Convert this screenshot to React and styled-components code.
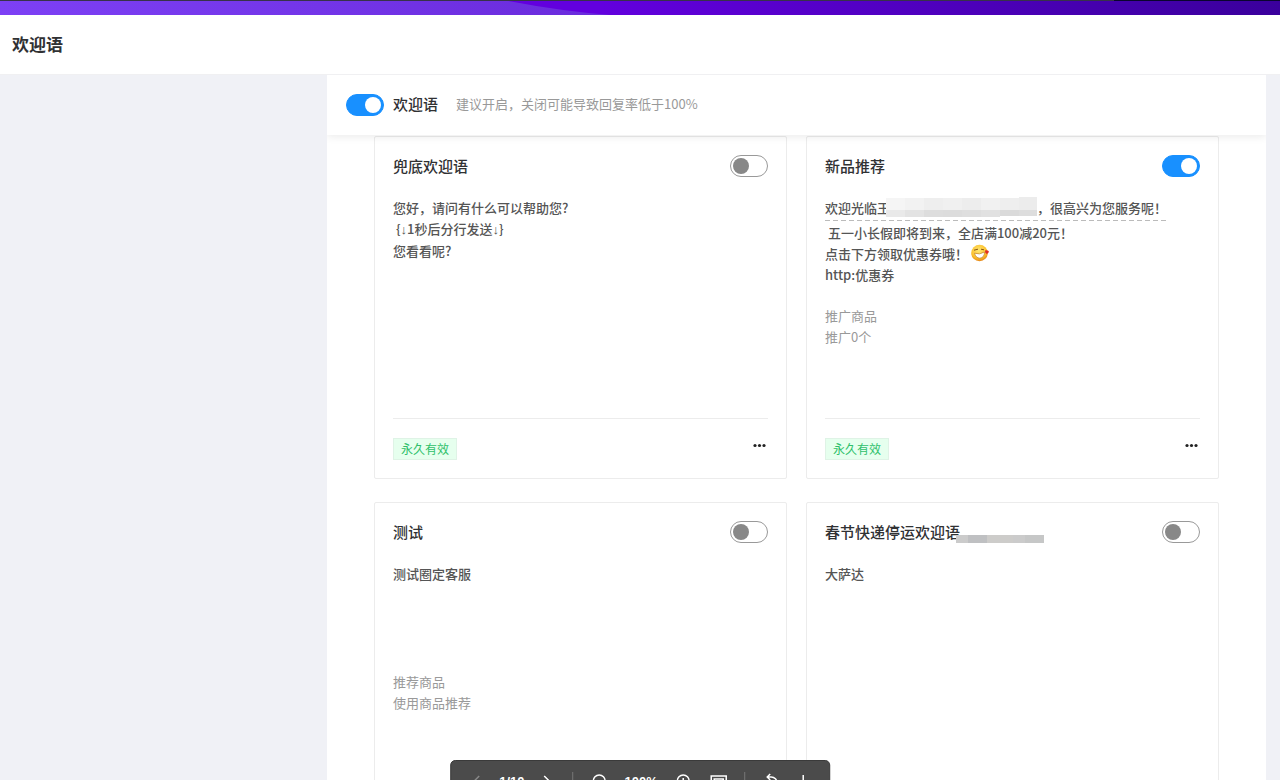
import React from "react";
import styled, { createGlobalStyle } from "styled-components";

const GlobalStyle = createGlobalStyle`
  * { box-sizing: border-box; }
  body {
    margin: 0;
    background: #f0f1f6;
    color: #303133;
    font-family: "Noto Sans CJK SC", "Liberation Sans", sans-serif;
    font-size: 13px;
    line-height: 21px;
  }
  h1, h2, p { margin: 0; }
`;

const Page = styled.div`
  height: 100vh;
  overflow-y: auto;
  scrollbar-width: none;
`;

const BannerEdge = styled.div`
  height: 1px;
  background: linear-gradient(90deg, #37324a 87%, #0a0530 87%);
`;

const Banner = styled.div`
  height: 14px;
  background: linear-gradient(90deg, #6200de 47%, #3a009c);
  svg { display: block; width: 48%; height: 14px; }
`;

const Header = styled.header`
  height: 60px;
  padding: 0 12px 2px;
  display: flex;
  align-items: center;
  background: #fff;
  border-bottom: 1px solid #f0f0f2;
`;

const PageTitle = styled.h1`
  font-size: 17px;
  line-height: 24px;
  font-weight: 700;
`;

const Main = styled.main`
  display: grid;
  grid-template-columns: 327px minmax(0, 1fr) 14px;
`;

const Panel = styled.section`
  grid-column: 2;
  background: #fff;
`;

const PanelHead = styled.label`
  height: 60px;
  padding: 0 19px;
  display: flex;
  align-items: center;
  background: #fff;
  box-shadow: 0 2px 8px rgba(0, 0, 0, 0.08);
  clip-path: inset(0 0 -10px 0);
`;

const PanelTitle = styled.span`
  margin: 0 18px 0 9px;
  padding-bottom: 3px;
  font-size: 15px;
  font-weight: 500;
`;

const Hint = styled.span`
  padding-bottom: 3px;
  color: #999;
`;

const Switch = styled.input`
  appearance: none;
  flex: none;
  margin: 0;
  width: 38px;
  height: 22px;
  padding: 2px;
  display: flex;
  border: 1px solid #999;
  border-radius: 11px;
  background: #fff;
  &::before {
    content: "";
    width: 16px;
    height: 16px;
    border-radius: 50%;
    background: #888;
  }
  &:checked {
    justify-content: flex-end;
    border-color: #1890ff;
    background: #1890ff;
  }
  &:checked::before { background: #fff; }
`;

const CardGrid = styled.div`
  padding: 1px 47px 23px;
  display: grid;
  grid-template-columns: repeat(2, minmax(0, 1fr));
  gap: 23px 19px;
`;

const CardBox = styled.article`
  min-height: 343px;
  padding: 18px;
  display: flex;
  flex-direction: column;
  border: 1px solid #ececec;
  border-radius: 2px;
`;

const CardHead = styled.div`
  display: flex;
  justify-content: space-between;
  align-items: center;
  height: 22px;
  margin-bottom: 20px;
`;

const CardTitle = styled.h2`
  display: flex;
  font-size: 15px;
  line-height: 22px;
  font-weight: 500;
`;

const Message = styled.div`
  min-height: 88px;
  color: #555;
  font-weight: 500;
  white-space: pre-wrap;
`;

const Arrow = styled.span`
  font-family: "Liberation Sans", sans-serif;
`;

const Greeting = styled.p`
  display: flex;
  width: fit-content;
  padding-bottom: 3px;
  margin-bottom: 1px;
  background: repeating-linear-gradient(90deg, #bbb 0 5px, transparent 5px 8px) bottom / 100% 1px no-repeat;
`;

const Promo = styled.div`
  margin: 20px 0;
  color: #999;
`;

const CardFoot = styled.footer`
  margin-top: auto;
  padding-top: 19px;
  display: flex;
  justify-content: space-between;
  border-top: 1px solid #ececec;
`;

const Tag = styled.span`
  padding: 0 7px;
  border: 1px solid #dff3e6;
  background: #e6ffee;
  color: #2fbf6b;
  font-size: 12px;
  line-height: 20px;
`;

const MoreButton = styled.button`
  width: 16px;
  height: 16px;
  padding: 0;
  border: 0;
  background: none;
  svg { display: block; }
`;

const NameMask = styled.svg`
  flex: none;
  display: block;
  margin-left: -4px;
`;

const Emoji = styled.svg`
  margin-left: 3px;
  vertical-align: -3px;
`;

const Toolbar = styled.div`
  position: fixed;
  left: 50%;
  bottom: -24px;
  transform: translateX(-50%);
  height: 44px;
  padding: 0 16px;
  display: flex;
  align-items: center;
  border: 1px solid #3a3a3a;
  border-radius: 5px;
  background: #4b4b4b;
  color: #fff;
  font: 700 13px/20px "Liberation Sans", sans-serif;
`;

const ToolGroup = styled.div`
  display: flex;
  align-items: center;
  gap: ${(p) => (p.$wide ? "15px" : "12px")};
`;

const ToolButton = styled.button`
  width: 20px;
  height: 20px;
  padding: 0;
  border: 0;
  background: none;
  color: ${(p) => (p.disabled ? "#888" : "#fff")};
  svg { display: block; }
`;

const Separator = styled.span`
  width: 1px;
  height: 20px;
  margin: 0 16px;
  background: #777;
`;

const toolPaths = {
  prev: "M12 4 6 10l6 6",
  next: "M8 4l6 6-6 6",
  zoomOut: "M16 9a6 6 0 1 1-12 0a6 6 0 0 1 12 0ZM14 14l4 4M7 9h6",
  zoomIn: "M16 9a6 6 0 1 1-12 0a6 6 0 0 1 12 0ZM14 14l4 4M7 9h6M10 6v6",
  fit: "M3 4h15v12H3ZM6 7h9v6H6Z",
  rotate: "M6 5h4a6 6 0 1 1-6 6M9 2 6 5l3 3",
  download: "M10 3v11M5 9l5 5 5-5M3 17h14",
};

function Tool({ name, label, disabled }) {
  return (
    <ToolButton type="button" aria-label={label} disabled={disabled}>
      <svg width="20" height="20" viewBox="0 0 20 20" fill="none" stroke="currentColor" strokeWidth="1.5">
        <path d={toolPaths[name]} />
      </svg>
    </ToolButton>
  );
}

function GreetingMask() {
  const top = ["#f5f5f5", "#f2f2f2", "#eee", "#f0f0f0", "#ededed", "#f1f1f1", "#eee", "#ececec"];
  const low = ["#e9e9e9", "#e3e3e3", "#ddd", "#dcdcdc", "#dedede", "#e1e1e1", "#dadada", "#ddd"];
  return (
    <NameMask width="151" height="21" viewBox="0 0 151 21" aria-hidden="true">
      {top.map((fill, i) => (
        <rect key={i} x={i * 19} y={i > 6 ? 0 : 1} width="19" height="13" fill={fill} />
      ))}
      {low.map((fill, i) => (
        <rect key={i} x={i * 19} y="13" width="19" height={i < 6 ? 7 : 6} fill={fill} />
      ))}
    </NameMask>
  );
}

function TitleMask() {
  return (
    <NameMask width="88" height="22" viewBox="0 0 88 22" aria-hidden="true">
      <rect y="14" width="88" height="8" fill="#cbcbcb" />
      <rect x="12" y="14" width="19" height="8" fill="#bfc0c2" />
      <rect x="31" y="14" width="26" height="8" fill="#cdccca" />
      <rect x="69" y="14" width="19" height="8" fill="#c6c7c7" />
    </NameMask>
  );
}

function LaughEmoji() {
  return (
    <Emoji width="18" height="18" viewBox="0 0 18 18" role="img" aria-label="笑脸">
      <defs>
        <radialGradient id="face" cx="45%" cy="35%" r="65%">
          <stop offset="0" stopColor="#ffe873" />
          <stop offset="0.7" stopColor="#fbc02d" />
          <stop offset="1" stopColor="#e5851a" />
        </radialGradient>
      </defs>
      <circle cx="8.5" cy="9" r="8.3" fill="url(#face)" />
      <path d="M3 6.2 7 5.2M10 5.2l3 .6" stroke="#8a5515" strokeWidth="1" fill="none" />
      <path d="M3.5 9.2q4.8 2 10-1.2q0 5.5-4.7 6.2Q4.8 14 3.5 9.2Z" fill="#fff" stroke="#b77420" strokeWidth="0.6" />
      <path d="M14 6.5q2-.8 3.6.5q.8 1.8-1.8 3q-2-.6-1.8-3.5Z" fill="#e12d25" />
    </Emoji>
  );
}

function Card({ title, mask, on, promo, children }) {
  return (
    <CardBox>
      <CardHead>
        <CardTitle>{title}{mask}</CardTitle>
        <Switch type="checkbox" role="switch" aria-label={title} defaultChecked={on} />
      </CardHead>
      <Message>{children}</Message>
      {promo && <Promo>{promo.map((line) => <p key={line}>{line}</p>)}</Promo>}
      <CardFoot>
        <Tag>永久有效</Tag>
        <MoreButton type="button" aria-label="更多">
          <svg width="16" height="16" viewBox="0 0 16 16" fill="#222">
            <circle cx="3" cy="7.5" r="1.6" />
            <circle cx="7.5" cy="7.5" r="1.6" />
            <circle cx="12" cy="7.5" r="1.6" />
          </svg>
        </MoreButton>
      </CardFoot>
    </CardBox>
  );
}

export default function App() {
  return (
    <>
      <GlobalStyle />
      <Page>
        <BannerEdge />
        <Banner>
          <svg viewBox="0 0 614 14" preserveAspectRatio="none" aria-hidden="true">
            <defs>
              <linearGradient id="swoosh">
                <stop offset="0" stopColor="#7d40f5" />
                <stop offset="1" stopColor="#6a2bdc" />
              </linearGradient>
            </defs>
            <path d="M0 0H508Q560 10 610 14H0Z" fill="url(#swoosh)" />
          </svg>
        </Banner>
        <Header>
          <PageTitle>欢迎语</PageTitle>
        </Header>
        <Main>
          <Panel>
            <PanelHead>
              <Switch type="checkbox" role="switch" defaultChecked />
              <PanelTitle>欢迎语</PanelTitle>
              <Hint>建议开启，关闭可能导致回复率低于100%</Hint>
            </PanelHead>
            <CardGrid>
              <Card title="兜底欢迎语">
                <p>您好，请问有什么可以帮助您?</p>
                <p>{" {"}<Arrow>↓</Arrow>1秒后分行发送<Arrow>↓</Arrow>{"}"}</p>
                <p>您看看呢?</p>
              </Card>
              <Card title="新品推荐" on promo={["推广商品", "推广0个"]}>
                <Greeting>欢迎光临王<GreetingMask />，很高兴为您服务呢！</Greeting>
                <p>{" 五一小长假即将到来，全店满100减20元！"}</p>
                <p>点击下方领取优惠券哦！<LaughEmoji /></p>
                <p>http:优惠券</p>
              </Card>
              <Card title="测试" promo={["推荐商品", "使用商品推荐"]}>
                <p>测试圈定客服</p>
              </Card>
              <Card title="春节快递停运欢迎语" mask={<TitleMask />}>
                <p>大萨达</p>
              </Card>
            </CardGrid>
          </Panel>
        </Main>
      </Page>
      <Toolbar role="toolbar" aria-label="图片预览">
        <ToolGroup>
          <Tool name="prev" label="上一张" disabled />
          <span>1/10</span>
          <Tool name="next" label="下一张" />
        </ToolGroup>
        <Separator />
        <ToolGroup $wide>
          <Tool name="zoomOut" label="缩小" />
          <span>100%</span>
          <Tool name="zoomIn" label="放大" />
          <Tool name="fit" label="适应窗口" />
        </ToolGroup>
        <Separator />
        <ToolGroup>
          <Tool name="rotate" label="旋转" />
          <Tool name="download" label="下载" />
        </ToolGroup>
      </Toolbar>
    </>
  );
}
